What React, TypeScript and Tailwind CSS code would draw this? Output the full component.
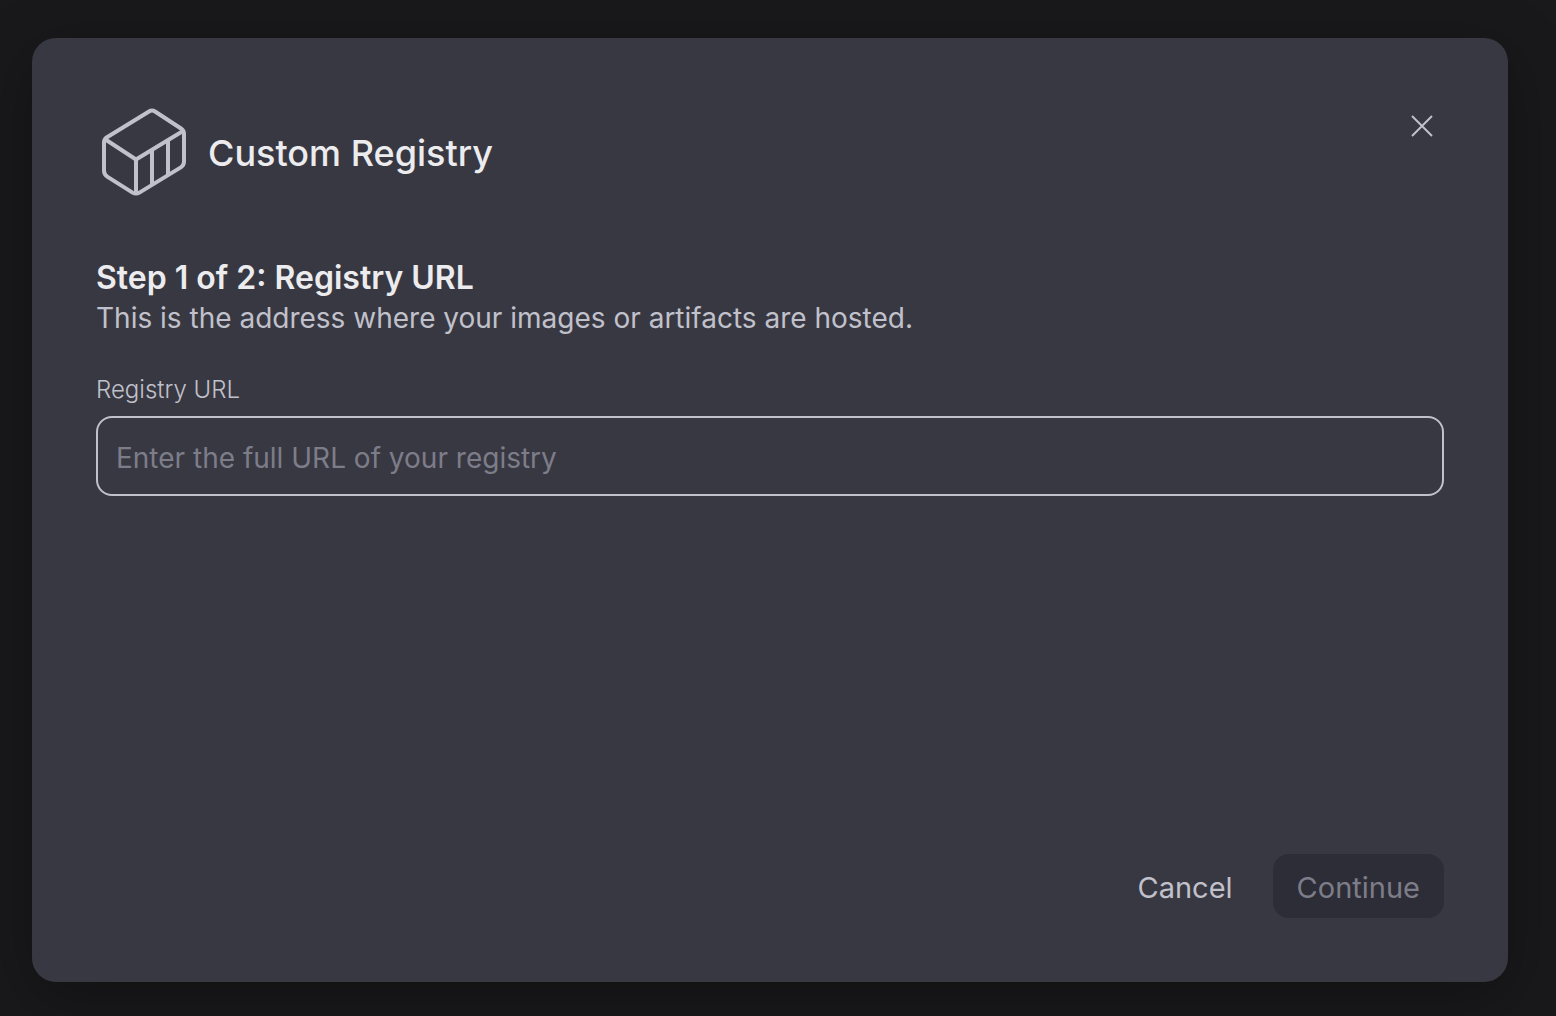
import { useState } from "react";

function RegistryIcon() {
  return (
    <svg
      viewBox="0 0 96 96"
      className="h-24 w-24 shrink-0 text-[#c1c1cb]"
      fill="none"
      stroke="currentColor"
      strokeWidth="4"
      strokeLinejoin="round"
      aria-hidden="true"
    >
      <path d="M53 7.5 11 33.2Q8 35 8 38.5V66.5Q8 70.5 11.2 72.6L36.6 88.6Q40 90.6 43.4 88.6L84.8 63.4Q88 61.4 88 57.6V30Q88 26.5 85 24.5L59 7.5Q56 5.7 53 7.5Z" />
      <path d="M9.5 35.5 40 55.5 87 27M40 55.5V89M56 46V81M72 36.5V71" />
    </svg>
  );
}

function CloseIcon() {
  return (
    <svg viewBox="0 0 24 24" className="h-6 w-6" fill="none" stroke="currentColor" strokeWidth="2" aria-hidden="true">
      <path d="M2 2 22 22M22 2 2 22" />
    </svg>
  );
}

export default function App() {
  const [url, setUrl] = useState("");

  return (
    <div className="flex min-h-screen bg-[#19191b] pt-[38px] pr-12 pb-[34px] pl-8 font-['Inter',sans-serif]">
      <form
        role="dialog"
        aria-labelledby="dialog-title"
        onSubmit={(e) => e.preventDefault()}
        className="flex flex-1 flex-col rounded-3xl bg-[#383842] p-16 shadow-[0_16px_64px_rgba(0,0,0,0.3)]"
      >
        <header className="flex items-start justify-between">
          <div className="flex items-center gap-4 py-0.5">
            <RegistryIcon />
            <h1 id="dialog-title" className="pt-0.5 text-[36px] leading-12 font-medium text-[#ececee]">
              Custom Registry
            </h1>
          </div>
          <button type="button" aria-label="Close" className="flex h-12 w-11 items-center justify-center text-[#c1c1cb]">
            <CloseIcon />
          </button>
        </header>

        <section className="mt-14">
          <h2 className="text-[32px] leading-10 font-semibold text-[#ececee]">Step 1 of 2: Registry URL</h2>
          <p className="text-[28px] leading-10 text-[#c1c1cb]">
            This is the address where your images or artifacts are hosted.
          </p>
        </section>

        <div className="mt-[34px] flex flex-col gap-2">
          <label htmlFor="registry-url" className="text-[24px] leading-9 font-light text-[#c1c1cb]">
            Registry URL
          </label>
          <input
            id="registry-url"
            type="text"
            value={url}
            onChange={(e) => setUrl(e.target.value)}
            placeholder="Enter the full URL of your registry"
            className="h-20 w-full rounded-2xl border-2 border-[#c1c1cb] bg-transparent px-[18px] pt-1 text-[28px] text-[#ececee] outline-none placeholder:text-[#7d7d89]"
          />
        </div>

        <footer className="mt-auto flex justify-end gap-4">
          <button type="button" className="h-16 rounded-2xl px-6 pt-1 text-[29px] text-[#c1c1cb]">
            Cancel
          </button>
          <button type="submit" disabled={!url} className="h-16 rounded-2xl bg-[#2d2d37] px-6 pt-1 text-[29px] text-[#7d7d89]">
            Continue
          </button>
        </footer>
      </form>
    </div>
  );
}
